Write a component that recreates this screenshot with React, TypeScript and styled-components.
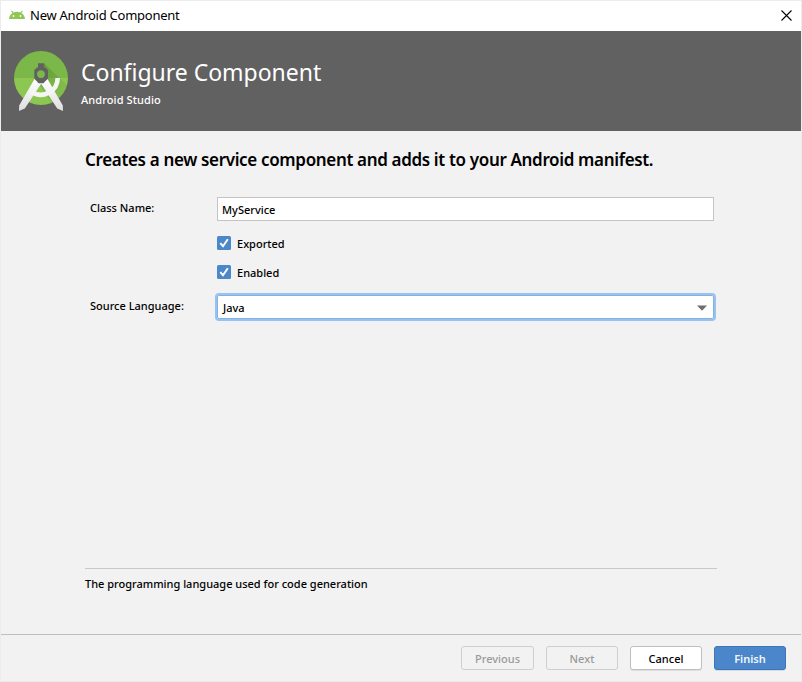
import React from "react";
import styled, { createGlobalStyle } from "styled-components";

const GlobalStyle = createGlobalStyle`
  *, *::before, *::after { box-sizing: border-box; }
  body { margin: 0; background: #f2f2f2; }
`;

const Dialog = styled.div`
  width: 802px;
  height: 682px;
  display: flex;
  flex-direction: column;
  border: 1px solid #ececec;
  background: #f2f2f2;
  color: #000;
  font: 500 11px/16px "Noto Sans", "Open Sans", sans-serif;
  overflow: hidden;
`;

const TitleBar = styled.div`
  height: 30px;
  flex: none;
  display: flex;
  align-items: center;
  padding: 0 9px 2px 8px;
  background: #fff;
`;

const WindowTitle = styled.span`
  flex: 1;
  margin-left: 5px;
  font-size: 13px;
  font-weight: 400;
  letter-spacing: -0.25px;
  line-height: 18px;
`;

const CloseButton = styled.button`
  display: flex;
  padding: 0;
  border: 0;
  background: none;
`;

const Banner = styled.header`
  height: 100px;
  flex: none;
  display: flex;
  padding: 18px 0 0 11px;
  background: #616161;
  color: #fff;
`;

const BannerText = styled.div`
  margin-left: 9px;
  padding-top: 7px;
`;

const BannerTitle = styled.h1`
  margin: 0;
  font-size: 23px;
  font-weight: 400;
  line-height: 32px;
  letter-spacing: -0.02px;
`;

const BannerSubtitle = styled.p`
  margin: 4px 0 0;
  letter-spacing: 0.1px;
`;

const Body = styled.main`
  flex: 1;
  display: flex;
  flex-direction: column;
  padding: 16px 84px 0;
`;

const Heading = styled.h2`
  margin: 0;
  font-size: 17px;
  font-weight: 600;
  line-height: 26px;
  letter-spacing: -0.34px;
  white-space: nowrap;
`;

const Form = styled.div`
  display: grid;
  grid-template-columns: 126px 501px;
  grid-template-rows: 39px 29px 28px 28px;
  margin: 23px 0 0 4px;
`;

const Label = styled.label<{ $offset?: number }>`
  padding: ${(p) => p.$offset ?? 4}px 0 0 1px;
`;

const TextField = styled.div`
  width: 497px;
  height: 24px;
  margin: 1px 0 0 2px;
  padding: 4px 0 0 4px;
  border: 1px solid #c4c4c4;
  background: #fff;
  line-height: 16px;
`;

const CheckRow = styled.label`
  grid-column: 2;
  display: flex;
  align-items: flex-start;
  padding-left: 2px;
  gap: 6px;
`;

const CheckBox = styled.span`
  width: 14px;
  height: 14px;
  margin-top: 1px;
  border-radius: 1.5px;
  background: #4b87c9;
  display: flex;
`;

const CheckText = styled.span`
  padding-top: 1px;
`;

const Select = styled.div`
  width: 501px;
  height: 28px;
  margin-top: 1px;
  padding: 1px 7px 0 6px;
  display: flex;
  align-items: center;
  justify-content: space-between;
  border: 2px solid #97c3f3;
  border-radius: 4px;
  background: #fff;
  box-shadow: inset 0 0 0 1px #87afe0;
`;

const Hint = styled.div`
  width: 632px;
  margin-top: auto;
  height: 66px;
  padding-top: 7px;
  border-top: 1px solid #c9c9c9;
`;

const Footer = styled.footer`
  height: 47px;
  flex: none;
  display: flex;
  justify-content: flex-end;
  align-items: flex-start;
  gap: 12px;
  padding: 11px 15px 0;
  border-top: 1px solid #bfbfbf;
`;

type Kind = "disabled" | "normal" | "primary";

const palette: Record<Kind, { bg: string; border: string; fg: string; shadow: string }> = {
  disabled: { bg: "#f2f2f2", border: "#cfcfcf", fg: "#9a9a9a", shadow: "none" },
  normal: { bg: "#fff", border: "#bfbfbf", fg: "#000", shadow: "0 1px 0 #dedede" },
  primary: { bg: "#4a86c9", border: "#3d75b8", fg: "#f2f6fb", shadow: "0 1px 0 #d5dbe2" },
};

const Button = styled.button<{ $kind: Kind; $wide?: boolean }>`
  width: ${(p) => (p.$wide ? 73 : 72)}px;
  height: 24px;
  padding: 1px 0 0;
  border: 1px solid ${(p) => palette[p.$kind].border};
  border-radius: 3px;
  background: ${(p) => palette[p.$kind].bg};
  color: ${(p) => palette[p.$kind].fg};
  box-shadow: ${(p) => palette[p.$kind].shadow};
  font: inherit;
  font-weight: ${(p) => (p.$kind === "primary" ? 600 : 500)};
`;

const AndroidIcon = () => (
  <svg width="16" height="10" viewBox="0 0 16 10">
    <path
      d="M0 9C.2 6.2 1.5 4.2 3.6 3L2 1l.9-.6L4.7 2.5a9 9 0 0 1 6.6 0L13.100 .4l.9.6L12.4 3C14.500 4.200 15.800 6.200 16 9z"
      fill="#8fc654"
    />
    <circle cx="4.5" cy="6" r=".9" fill="#fff" />
    <circle cx="11.5" cy="6" r=".9" fill="#fff" />
  </svg>
);

const StudioLogo = () => (
  <svg width="60" height="64" viewBox="12 49 60 64">
    <defs>
      <clipPath id="disc"><circle cx="41" cy="78" r="27" /></clipPath>
      <linearGradient id="leg" x1="0" y1="0" x2="0" y2="1">
        <stop offset="0" stopColor="#fff" />
        <stop offset="1" stopColor="#dedede" />
      </linearGradient>
      <linearGradient id="shade" x1="0" y1="0" x2="1" y2="1">
        <stop offset="0" stopColor="#4f8530" stopOpacity=".6" />
        <stop offset="1" stopColor="#6fa83f" stopOpacity=".1" />
      </linearGradient>
    </defs>
    <g clipPath="url(#disc)">
      <rect x="14" y="51" width="54" height="27" fill="#7cb74a" />
      <rect x="14" y="78" width="54" height="27" fill="#8bc751" />
      <path d="M44.2 63.5L70 88v22H56L38 82z" fill="url(#shade)" />
    </g>
    <path d="M34.500 79L42 82.5L24.8 108.5L19 111L19.2 105.5Z" fill="url(#leg)" />
    <path d="M47.500 79L40.300 82.5L57.200 108.5L63 111L62.8 105.5Z" fill="url(#leg)" />
    <path d="M57.7 78A16.7 16.7 0 0 1 31 91.3" fill="none" stroke="#f5f5f5" strokeWidth="4.6" />
    <path
      fillRule="evenodd"
      d="M38 63.3h6.2V67.5h1l2.8 2.5v8.5l-4.6 4.8h-4.9l-4.2-4.8v-8.5L37 67.5h1zM41 70.5a3.7 3.7 0 1 0 0 7.4a3.7 3.7 0 0 0 0-7.4z"
      fill="#616161"
    />
    <circle cx="41" cy="74.2" r="3.7" fill="#7cb74a" />
  </svg>
);

export default function App() {
  return (
    <>
      <GlobalStyle />
      <Dialog>
        <TitleBar>
          <AndroidIcon />
          <WindowTitle>New Android Component</WindowTitle>
          <CloseButton aria-label="Close">
            <svg width="11" height="11" viewBox="0 0 11 11">
              <path d="M.5 .5l10 10M10.5 .5L.5 10.5" stroke="#000" strokeWidth="1.1" />
            </svg>
          </CloseButton>
        </TitleBar>
        <Banner>
          <StudioLogo />
          <BannerText>
            <BannerTitle>Configure Component</BannerTitle>
            <BannerSubtitle>Android Studio</BannerSubtitle>
          </BannerText>
        </Banner>
        <Body>
          <Heading>Creates a new service component and adds it to your Android manifest.</Heading>
          <Form>
            <Label>Class Name:</Label>
            <TextField>MyService</TextField>
            {["Exported", "Enabled"].map((name) => (
              <CheckRow key={name}>
                <CheckBox>
                  <svg width="14" height="14" viewBox="0 0 14 14">
                    <path d="M3.3 7.2L6 10.2L10.8 3.3" fill="none" stroke="#fff" strokeWidth="2" />
                  </svg>
                </CheckBox>
                <CheckText>{name}</CheckText>
              </CheckRow>
            ))}
            <Label $offset={6}>Source Language:</Label>
            <Select>
              Java
              <svg width="10" height="6" viewBox="0 0 10 6">
                <path d="M0 .5h10L5 5.7z" fill="#6e6e6e" />
              </svg>
            </Select>
          </Form>
          <Hint>The programming language used for code generation</Hint>
        </Body>
        <Footer>
          <Button $kind="disabled" $wide>Previous</Button>
          <Button $kind="disabled">Next</Button>
          <Button $kind="normal">Cancel</Button>
          <Button $kind="primary">Finish</Button>
        </Footer>
      </Dialog>
    </>
  );
}
